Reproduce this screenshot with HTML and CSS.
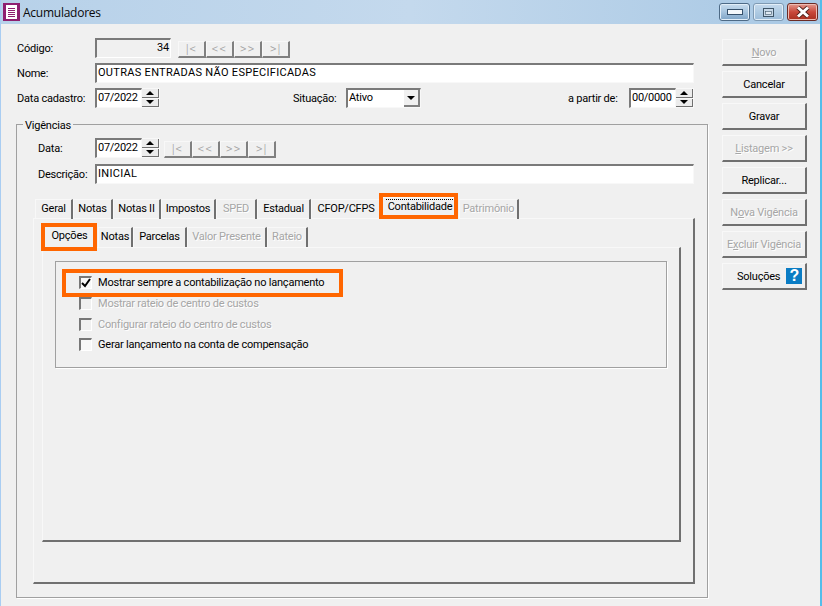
FILE: index.html
```html
<!DOCTYPE html>
<html lang="pt">
<head>
<meta charset="utf-8">
<title>Acumuladores</title>
<link rel="stylesheet" href="styles.css">
</head>
<body>
<div class="window">
  <header class="titlebar">
    <svg class="appicon" width="17" height="18" viewBox="0 0 17 18"><rect width="17" height="18" fill="#8e1f6f"/><rect x="3" y="2" width="11" height="14" fill="#fff"/><path d="M5 5.5h7M5 7.5h7M5 9.5h7M5 11.5h7M5 13.5h7" stroke="#8e1f6f" stroke-width="1"/></svg>
    <span class="title">Acumuladores</span>
    <div class="winbtns">
      <div class="winbtn"><svg width="16" height="6" viewBox="0 0 16 6"><rect x=".5" y=".5" width="15" height="5" fill="#f4f8fb" stroke="#35506b"/></svg></div>
      <div class="winbtn pale"><svg width="11" height="9" viewBox="0 0 11 9"><rect x=".5" y=".5" width="10" height="8" fill="#c7d8e8" stroke="#3f5568"/><rect x="2.5" y="3.5" width="6" height="3" fill="#dfe9f2" stroke="#3f5568" stroke-width=".6"/></svg></div>
      <div class="winbtn close"><svg width="18" height="12" viewBox="0 0 18 12"><path d="M4 1.5l10 9M14 1.5l-10 9" stroke="#4a1d18" stroke-width="4.6"/><path d="M4 1.5l10 9M14 1.5l-10 9" stroke="#fff" stroke-width="3"/></svg></div>
    </div>
  </header>
  <div class="content">
    <main class="main">
      <div class="row first">
        <label class="lab">Código:</label>
        <div class="field code">34</div>
        <div class="nav"><span class="navb">|&lt;</span><span class="navb">&lt;&lt;</span><span class="navb">&gt;&gt;</span><span class="navb">&gt;|</span></div>
      </div>
      <div class="row">
        <label class="lab">Nome:</label>
        <div class="field wide">OUTRAS ENTRADAS NÃO ESPECIFICADAS</div>
      </div>
      <div class="row third">
        <label class="lab">Data cadastro:</label>
        <div class="spin"><div class="field date">07/2022</div><div class="spinbtns"><span class="up"></span><span class="down"></span></div></div>
        <label class="lab-sit">Situação:</label>
        <div class="field combo">Ativo<span class="drop"></span></div>
        <label class="lab-from">a partir de:</label>
        <div class="spin"><div class="field date">00/0000</div><div class="spinbtns"><span class="up"></span><span class="down"></span></div></div>
      </div>
      <section class="group">
        <span class="legend">Vigências</span>
        <div class="row inset">
          <label class="lab short">Data:</label>
          <div class="spin"><div class="field date">07/2022</div><div class="spinbtns"><span class="up"></span><span class="down"></span></div></div>
          <div class="nav nav2"><span class="navb">|&lt;</span><span class="navb">&lt;&lt;</span><span class="navb">&gt;&gt;</span><span class="navb">&gt;|</span></div>
        </div>
        <div class="row inset">
          <label class="lab short">Descrição:</label>
          <div class="field wide">INICIAL</div>
        </div>
        <div class="tabs">
          <div class="strip outer">
            <span class="tab">Geral</span><span class="tab">Notas</span><span class="tab">Notas II</span><span class="tab">Impostos</span><span class="tab off">SPED</span><span class="tab">Estadual</span><span class="tab">CFOP/CFPS</span>
            <span class="tab on focus"><span class="mark"></span>Contabilidade</span>
            <span class="tab off">Patrimônio</span>
          </div>
          <div class="panel outerpanel">
            <div class="strip inner">
              <span class="tab on"><span class="mark mark2"></span>Opções</span><span class="tab">Notas</span><span class="tab">Parcelas</span><span class="tab off">Valor Presente</span><span class="tab off">Rateio</span>
            </div>
            <div class="panel innerpanel">
              <div class="optbox">
                <div class="opt"><span class="mark mark3"></span><span class="check"><svg width="10" height="10" viewBox="0 0 10 10"><path d="M1 5l3 3 5-7" fill="none" stroke="#000" stroke-width="2"/></svg></span>Mostrar sempre a contabilização no lançamento</div>
                <div class="opt off"><span class="check"></span>Mostrar rateio de centro de custos</div>
                <div class="opt off"><span class="check"></span>Configurar rateio do centro de custos</div>
                <div class="opt"><span class="check"></span>Gerar lançamento na conta de compensação</div>
              </div>
            </div>
          </div>
        </div>
      </section>
    </main>
    <aside class="side">
      <button class="btn" disabled><u>N</u>ovo</button>
      <button class="btn">Cancelar</button>
      <button class="btn">Gravar</button>
      <button class="btn" disabled><u>L</u>istagem &gt;&gt;</button>
      <button class="btn">Replicar...</button>
      <button class="btn" disabled>N<u>o</u>va Vigência</button>
      <button class="btn" disabled>E<u>x</u>cluir Vigência</button>
      <button class="btn help">Soluções <span class="q">?</span></button>
    </aside>
  </div>
</div>
</body>
</html>
```
FILE: styles.css
```css
* { box-sizing: border-box; }
html, body { margin: 0; padding: 0; }
body { font: 11px Roboto, "Liberation Sans", sans-serif; letter-spacing: -0.22px; color: #000; background: #f0f0f0; }
.window { width: 822px; height: 606px; overflow: hidden; background: #f0f0f0; border-left: 1px solid #a9cdf2; border-right: 2px solid #55bdea; }
.titlebar { height: 24px; display: flex; align-items: center; padding-left: 2px; background: linear-gradient(to right, #b7d1e9, #c4d9ed 50%, #a8c8e4); }
.appicon { flex: none; }
.title { margin-left: 3px; font: 12px "Open Sans", sans-serif; letter-spacing: -0.25px; color: #0a0a0a; }
.winbtns { margin-left: auto; margin-right: 2px; display: flex; gap: 3px; }
.winbtn { width: 31px; height: 18px; display: flex; align-items: center; justify-content: center; border: 1px solid #4d6a86; border-radius: 3px; background: linear-gradient(#c8dcee, #a6c4de 50%, #7da3c6); box-shadow: inset 0 0 0 1px #e2eef8; }
.winbtn.pale { background: linear-gradient(#c5d9ec, #afcbe3 50%, #9cbcd9); border-color: #7f9ab3; }
.winbtn.close { background: linear-gradient(#e39a8f, #c9483a 50%, #a93020); border-color: #6b2b25; box-shadow: inset 0 0 0 1px #eebcb3; }
.content { display: flex; padding-left: 15px; }
.main { width: 692px; flex: none; }
.row { display: flex; align-items: flex-start; height: 20px; margin-top: 5px; padding-left: 1px; }
.row.first { margin-top: 14px; }
.lab { width: 78px; flex: none; line-height: 21px; }
.lab.short { width: 57px; }
.lab-sit { width: 53px; margin-left: 133px; line-height: 21px; flex: none; }
.lab-from { margin-left: 147px; width: 61px; line-height: 21px; flex: none; }
.field { height: 20px; background: #fff; border-style: solid; border-width: 2px 1px 1px 2px; border-color: #7a7a7a #f8f8f8 #f8f8f8 #7a7a7a; padding-left: 1px; line-height: 15px; white-space: nowrap; overflow: hidden; }
.field.code { width: 76px; text-align: right; padding-right: 1px; background: #f0f0f0; border-right-color: #fff; border-bottom-color: #fff; }
.field.wide { width: 599px; letter-spacing: 0.3px; }
.field.date { width: 47px; letter-spacing: -0.3px; }
.spin { display: flex; flex: none; }
.spinbtns { width: 18px; height: 20px; display: flex; flex-direction: column; background: #f8f8f8; padding: 1px 1px 1px 0; gap: 1px; }
.spinbtns span { flex: 1; position: relative; background: #ececec; border-bottom: 1px solid #707070; border-right: 1px solid #707070; display: flex; align-items: center; justify-content: center; }
.up::after { content: ""; border: 4px solid transparent; border-top: 0; border-bottom: 4px solid #000; }
.down::after { content: ""; border: 4px solid transparent; border-bottom: 0; border-top: 4px solid #000; }
.combo { width: 75px; position: relative; margin-right: 0; }
.drop { position: absolute; right: 0; top: 0; width: 16px; height: 17px; background: #f0f0f0; border-right: 2px solid #808080; border-bottom: 2px solid #808080; display: flex; align-items: center; justify-content: center; }
.drop::after { content: ""; border: 4px solid transparent; border-bottom: 0; border-top: 4px solid #000; }
.nav { display: flex; gap: 0; margin: 3px 0 0 7px; }
.nav2 { margin-left: 4px; }
.navb { width: 28px; height: 17px; text-align: center; line-height: 14px; color: #a0a0a0; background: #f0f0f0; border-style: solid; border-width: 1px 2px 2px 1px; border-color: #f8f8f8 #808080 #808080 #f8f8f8; font: 300 13px/14px Roboto, sans-serif; letter-spacing: 1px; }
.third { margin-bottom: 16px; }
.group { position: relative; width: 692px; height: 474px; border: 1px solid #a0a0a0; box-shadow: 1px 1px 0 #fff; }
.legend { position: absolute; left: 6px; top: -6px; padding: 0 2px; background: #f0f0f0; line-height: 14px; }
.inset { padding-left: 21px; margin-top: 6px; }
.legend + .inset { margin-top: 13px; }
.tabs { margin: 13px 0 0 16px; width: 662px; }
.strip { display: grid; align-items: end; }
.outer { height: 21px; padding-left: 2px; grid-template-columns: 38px 40px 48px 55px 41px 54px 71px 77px 60px; }
.inner { height: 22px; margin-top: 6px; padding-left: 2px; grid-template-columns: 54px 35px 54px 80px 41px; }
.tab { position: relative; display: block; height: 20px; text-align: center; line-height: 18px; white-space: nowrap; border-style: solid; border-width: 1px 2px 0 1px; border-color: #f8f8f8 #707070 transparent #f8f8f8; }
.tab.off { color: #a6a6a6; text-shadow: 1px 1px 0 #fff; }
.tab.on { height: 22px; line-height: 18px; border-right-color: #f0f0f0; z-index: 2; background: #f0f0f0; }
.inner .tab.on { line-height: 20px; padding-right: 2px; }
.tab.focus::before { content: ""; position: absolute; left: 3px; right: 2px; top: 1px; border-top: 1px dotted #000; }
.mark { position: absolute; border: 4px solid #ff6600; z-index: 5; }
.focus .mark { left: -4px; top: -5px; width: 79px; height: 26px; }
.mark2 { left: -4px; top: -3px; width: 56px; height: 28px; }
.panel { border-style: solid; border-width: 1px 2px 2px 1px; border-color: #f8f8f8 #707070 #707070 #f8f8f8; }
.outerpanel { height: 366px; padding: 0 0 0 8px; }
.innerpanel { width: 639px; height: 295px; padding: 13px 0 0 12px; }
.optbox { width: 612px; height: 107px; border: 1px solid #a0a0a0; box-shadow: 1px 1px 0 #fff; padding-top: 14px; padding-left: 23px; }
.opt { position: relative; display: flex; align-items: center; height: 13px; margin-bottom: 8px; white-space: nowrap; }
.opt:nth-child(3) { margin-bottom: 7px; }
.opt.off { color: #a6a6a6; text-shadow: 1px 1px 0 #fff; }
.check { width: 13px; height: 13px; flex: none; margin-right: 6px; background: #f8f8f8; border-style: solid; border-width: 2px 1px 1px 2px; border-color: #777 #fff #fff #777; display: flex; align-items: center; justify-content: center; }
.opt.off .check { background: #f0f0f0; }
.mark3 { left: -17px; top: -7px; width: 281px; height: 28px; }
.side { margin-left: 14px; padding-top: 15px; display: flex; flex-direction: column; gap: 5px; width: 85px; }
.btn { width: 85px; height: 27px; padding: 0; margin: 0; font: inherit; letter-spacing: inherit; color: #000; background: #f0f0f0; border-style: solid; border-width: 1px 2px 2px 1px; border-color: #f8f8f8 #707070 #707070 #f8f8f8; white-space: nowrap; }
.btn:disabled { color: #a6a6a6; text-shadow: 1px 1px 0 #fff; }
.help { display: flex; align-items: center; justify-content: flex-start; padding-left: 14px; gap: 6px; }
.q { width: 16px; height: 16px; background: #0a7cc4; color: #fff; font: bold 16px/16px "Liberation Sans", sans-serif; letter-spacing: 0; text-align: center; }
```
